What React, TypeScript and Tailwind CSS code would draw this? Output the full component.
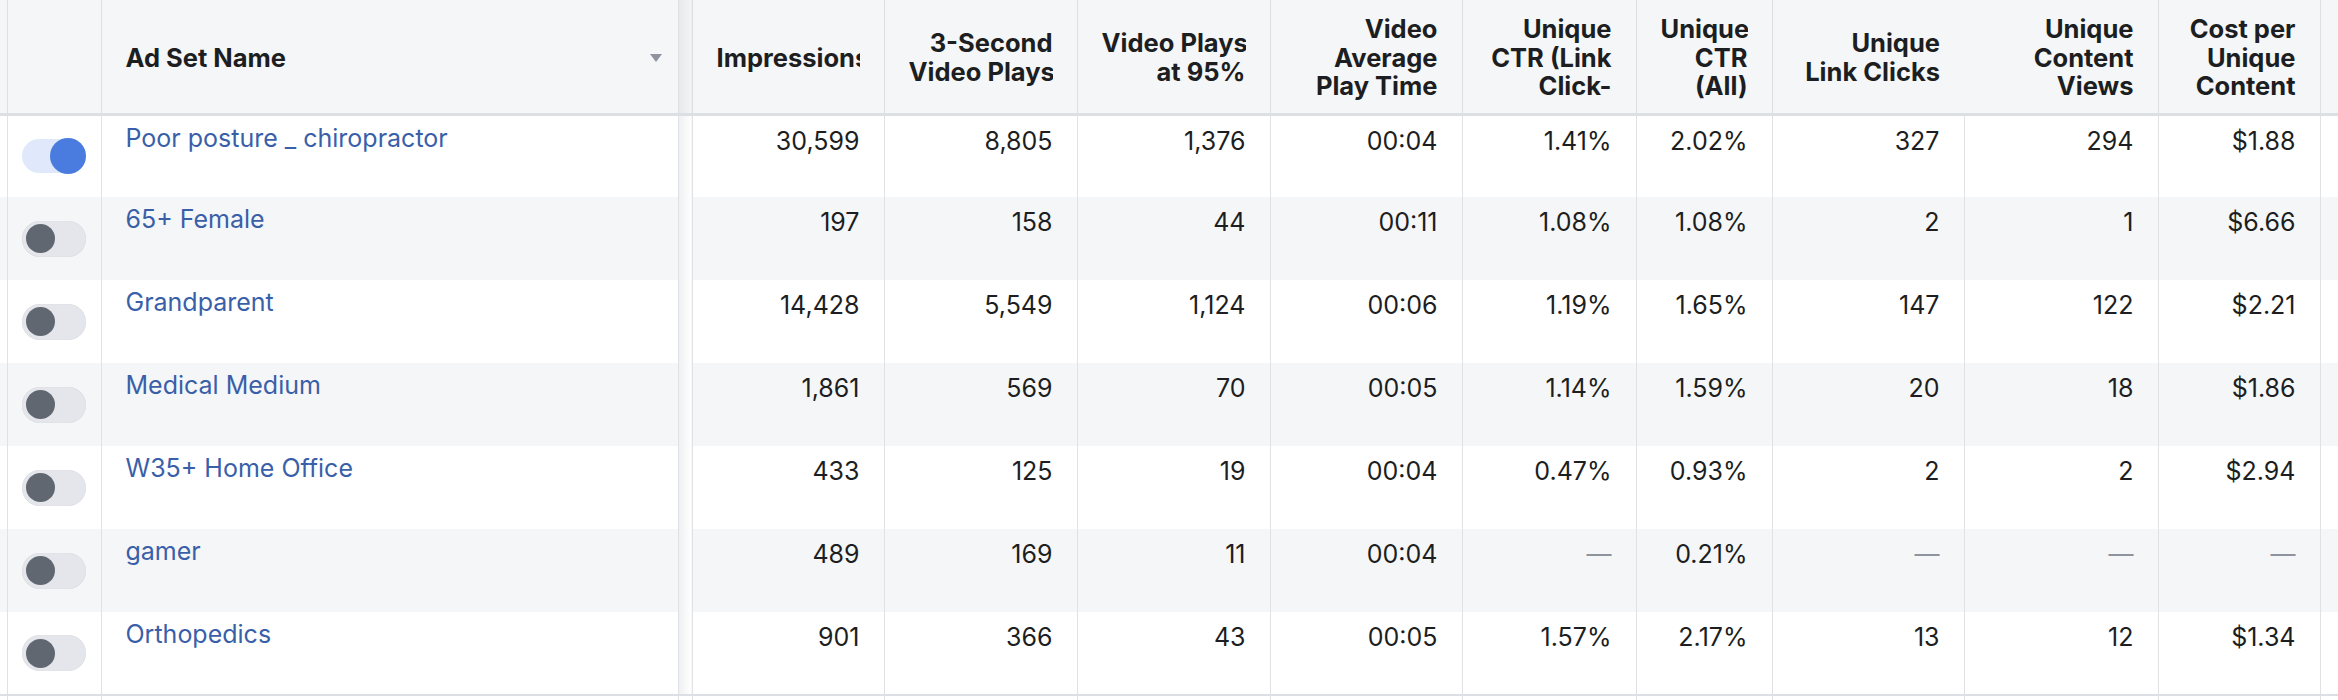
import React from "react";

type Row = {
  name: string;
  on: boolean;
  values: string[];
};

const rows: Row[] = [
  { name: "Poor posture _ chiropractor", on: true, values: ["30,599", "8,805", "1,376", "00:04", "1.41%", "2.02%", "327", "294", "$1.88"] },
  { name: "65+ Female", on: false, values: ["197", "158", "44", "00:11", "1.08%", "1.08%", "2", "1", "$6.66"] },
  { name: "Grandparent", on: false, values: ["14,428", "5,549", "1,124", "00:06", "1.19%", "1.65%", "147", "122", "$2.21"] },
  { name: "Medical Medium", on: false, values: ["1,861", "569", "70", "00:05", "1.14%", "1.59%", "20", "18", "$1.86"] },
  { name: "W35+ Home Office", on: false, values: ["433", "125", "19", "00:04", "0.47%", "0.93%", "2", "2", "$2.94"] },
  { name: "gamer", on: false, values: ["489", "169", "11", "00:04", "—", "0.21%", "—", "—", "—"] },
  { name: "Orthopedics", on: false, values: ["901", "366", "43", "00:05", "1.57%", "2.17%", "13", "12", "$1.34"] },
];

// metric columns: width + header lines
const columns = [
  { w: "w-[192px]", lines: ["Impressions"], clip: true },
  { w: "w-[193px]", lines: ["3-Second", "Video Plays"] },
  { w: "w-[193px]", lines: ["Video Plays", "at 95%"] },
  { w: "w-[192px]", lines: ["Video", "Average", "Play Time"] },
  { w: "w-[174px]", lines: ["Unique", "CTR (Link", "Click-"] },
  { w: "w-[136px]", lines: ["Unique", "CTR", "(All)"] },
  { w: "w-[192px]", lines: ["Unique", "Link Clicks"], noBorder: true },
  { w: "w-[194px]", lines: ["Unique", "Content", "Views"] },
  { w: "w-[162px]", lines: ["Cost per", "Unique", "Content"] },
];

const Toggle = ({ on }: { on: boolean }) =>
  on ? (
    <div className="mx-auto flex h-[34px] w-[64px] items-center justify-end rounded-full bg-[#e0e9fc]">
      <div className="h-[36px] w-[36px] rounded-full bg-[#4a7ce0]" />
    </div>
  ) : (
    <div className="mx-auto flex h-[36px] w-[64px] items-center rounded-full bg-[#e4e6eb] shadow-[inset_0_0_1px_rgba(0,0,0,0.15)]">
      <div className="ml-[4px] h-[29px] w-[29px] rounded-full bg-[#606770]" />
    </div>
  );

export default function App() {
  return (
    <div className="h-[700px] w-[2338px] overflow-hidden bg-white font-[Inter,sans-serif] text-[25px] text-[#1c1e21]">
      <table className="w-[2338px] table-fixed border-collapse">
        <colgroup>
          <col className="w-[7px]" />
          <col className="w-[94px]" />
          <col className="w-[577px]" />
          <col className="w-[14px]" />
          {columns.map((c, i) => (
            <col key={i} className={c.w} />
          ))}
          <col />
        </colgroup>
        <thead>
          <tr className="h-[114px] border-b-[3px] border-[#dcdfe3] bg-[#f5f6f7]">
            <th className="border-r border-[#dcdfe3]" />
            <th className="border-r border-[#dcdfe3]" />
            <th className="border-r border-[#dcdfe3] p-0 text-left">
              <div className="flex items-center justify-between pl-6 pr-[16px] pt-[3px] text-[25.5px] leading-[28.5px] font-bold">
                <span>Ad Set Name</span>
                <svg width="12" height="8" viewBox="0 0 12 8">
                  <path d="M0 0h12L6 8z" fill="#8d949e" />
                </svg>
              </div>
            </th>
            <th className="border-r border-[#dcdfe3] bg-gradient-to-r from-[#e6e8eb] to-[#f3f4f6]" />
            {columns.map((c, i) => (
              <th
                key={i}
                className={`overflow-hidden p-0 text-right align-middle ${c.noBorder ? "" : "border-r border-[#dcdfe3]"}`}
              >
                <div className="mt-[3px] px-6 text-[25.5px] leading-[28.5px] font-bold">
                  <div className={`max-h-[86px] overflow-hidden ${c.clip ? "text-left" : ""}`}>
                    {c.lines.map((l, j) => (
                      <div key={j} className="whitespace-nowrap">
                        {l}
                      </div>
                    ))}
                  </div>
                </div>
              </th>
            ))}
            <th />
          </tr>
        </thead>
        <tbody>
          {rows.map((r, i) => (
            <tr key={i} className={`h-[83px] ${i % 2 === 1 ? "bg-[#f5f6f7]" : "bg-white"}`}>
              <td className="border-r border-[#e0e2e6]" />
              <td className="border-r border-[#e0e2e6] p-0 align-middle">
                <Toggle on={r.on} />
              </td>
              <td className="border-r border-[#e0e2e6] p-0 align-top">
                <div className="pl-6 pt-[8px] leading-[28px] text-[#3a5fa9]">{r.name}</div>
              </td>
              <td className="border-r border-[#e0e2e6] bg-gradient-to-r from-[#eeeff1] to-white" />
              {r.values.map((v, j) => (
                <td key={j} className="border-r border-[#e0e2e6] p-0 text-right align-top">
                  <div className={`pr-6 pt-[11px] leading-[28px] ${v === "—" ? "text-[#8d949e]" : ""}`}>{v}</div>
                </td>
              ))}
              <td />
            </tr>
          ))}
          <tr className="h-[20px] border-t-2 border-[#dcdfe3]">
            <td className="border-r border-[#e0e2e6]" />
            <td className="border-r border-[#e0e2e6]" />
            <td className="border-r border-[#e0e2e6]" />
            <td className="border-r border-[#e0e2e6]" />
            {columns.map((_, j) => (
              <td key={j} className="border-r border-[#e0e2e6]" />
            ))}
            <td />
          </tr>
        </tbody>
      </table>
    </div>
  );
}
